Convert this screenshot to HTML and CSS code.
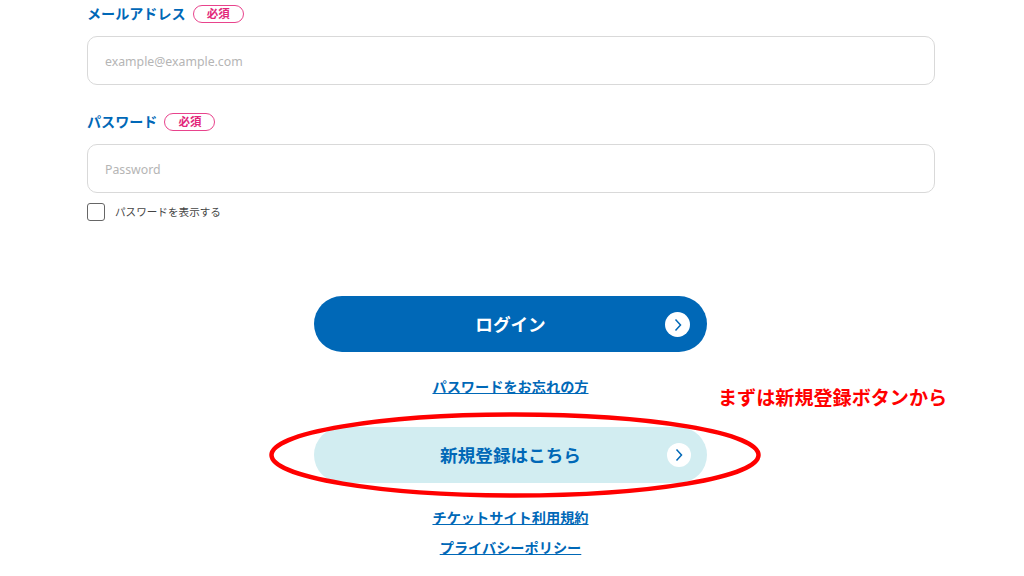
FILE: index.html
```html
<!DOCTYPE html>
<html lang="ja">
<head>
    <meta charset="UTF-8">
    <title>ログイン</title>
    <link rel="stylesheet" href="styles.css">
</head>
<body>

    <div class="page">
        <!-- 入力欄 -->
        <form class="login-form">
            <div class="field">
                <div class="field-label"><span>メールアドレス</span><span class="required">必須</span></div>
                <input class="text-input" type="text" placeholder="example@example.com">
            </div>
            <div class="field">
                <div class="field-label"><span>パスワード</span><span class="required">必須</span></div>
                <input class="text-input" type="text" placeholder="Password">
            </div>
            <label class="show-password"><span class="checkbox"></span><span class="show-text">パスワードを表示する</span></label>
        </form>

        <!-- ボタンとリンク -->
        <div class="actions">
            <a class="btn btn-primary">ログイン
                <span class="btn-arrow">
                    <svg width="10" height="14" viewBox="0 0 10 14"><path d="M2.5 1.5 L7.5 7 L2.5 12.5" fill="none" stroke="#0068b7" stroke-width="1.5"/></svg>
                </span>
            </a>
            <a class="text-link forgot-link">パスワードをお忘れの方</a>
            <a class="btn btn-secondary">新規登録はこちら
                <span class="btn-arrow">
                    <svg width="10" height="14" viewBox="0 0 10 14"><path d="M2.5 1.5 L7.5 7 L2.5 12.5" fill="none" stroke="#0068b7" stroke-width="1.5"/></svg>
                </span>
            </a>
            <a class="text-link terms-link">チケットサイト利用規約</a>
            <a class="text-link privacy-link">プライバシーポリシー</a>
        </div>

        <!-- 注釈 -->
        <div class="note-text">まずは新規登録ボタンから</div>
        <svg class="note-ellipse" width="494" height="88" viewBox="0 0 494 88">
            <ellipse cx="247" cy="44" rx="243.5" ry="40.5" fill="none" stroke="#f00" stroke-width="4.5"/>
        </svg>
    </div>

</body>
</html>
```

FILE: styles.css
```css
html, body { margin: 0; padding: 0; background-color: #fff; font-family: "Noto Sans CJK JP", "Noto Sans", sans-serif; color: #333; overflow: hidden; }
.page { position: relative; width: 1024px; height: 576px; overflow: hidden; }

.login-form { padding: 3px 89px 0 87px; }
.field { margin-bottom: 26px; }
.field-label { display: flex; align-items: center; gap: 7px; height: 20px; margin-bottom: 13px; font-size: 14.1px; font-weight: 700; color: #0068b7; line-height: 20px; }
.required { box-sizing: border-box; width: 51px; height: 18px; margin-top: 2px; border: 1px solid #e8438c; border-radius: 9px; font-size: 11.5px; line-height: 15px; text-align: center; color: #e2277a; }
.text-input { display: block; box-sizing: border-box; width: 100%; height: 49px; padding: 2px 17px 0; border: 1px solid #d9d9d9; border-radius: 10px; font-family: "Noto Sans", sans-serif; font-size: 12.3px; background-color: #fff; }
.text-input::placeholder { color: #b5b5b5; opacity: 1; }
.show-password { display: flex; align-items: center; gap: 10px; margin-top: -16px; font-size: 10.6px; color: #444; }
.show-text { margin-bottom: 2px; }
.checkbox { box-sizing: border-box; width: 18px; height: 18px; border: 1px solid #666; border-radius: 3px; }

.actions { display: flex; flex-direction: column; align-items: center; margin: 75px 0 0 -3px; }
.btn { position: relative; box-sizing: border-box; display: flex; align-items: center; justify-content: center; width: 393px; height: 56px; padding-bottom: 2px; border-radius: 28px; font-size: 17.6px; font-weight: 700; }
.btn-primary { background-color: #0068b7; color: #fff; }
.btn-secondary { background-color: #d2edf1; color: #0068b7; }
.btn-arrow { position: absolute; right: 17px; top: 16px; display: flex; align-items: center; justify-content: center; width: 25px; height: 25px; border-radius: 50%; background-color: #fff; }
.btn-secondary .btn-arrow { right: 16px; width: 24px; height: 24px; }
.text-link { font-size: 14.2px; font-weight: 700; line-height: 20px; color: #0068b7; text-decoration: underline; }
.forgot-link { margin: 24px 0 31px; }
.terms-link { margin: 24px 0 10px; }

.note-text { position: absolute; left: 718px; top: 384px; font-size: 19.1px; font-weight: 700; line-height: 26px; color: #f00; }
.note-ellipse { position: absolute; left: 268px; top: 411px; }
```
